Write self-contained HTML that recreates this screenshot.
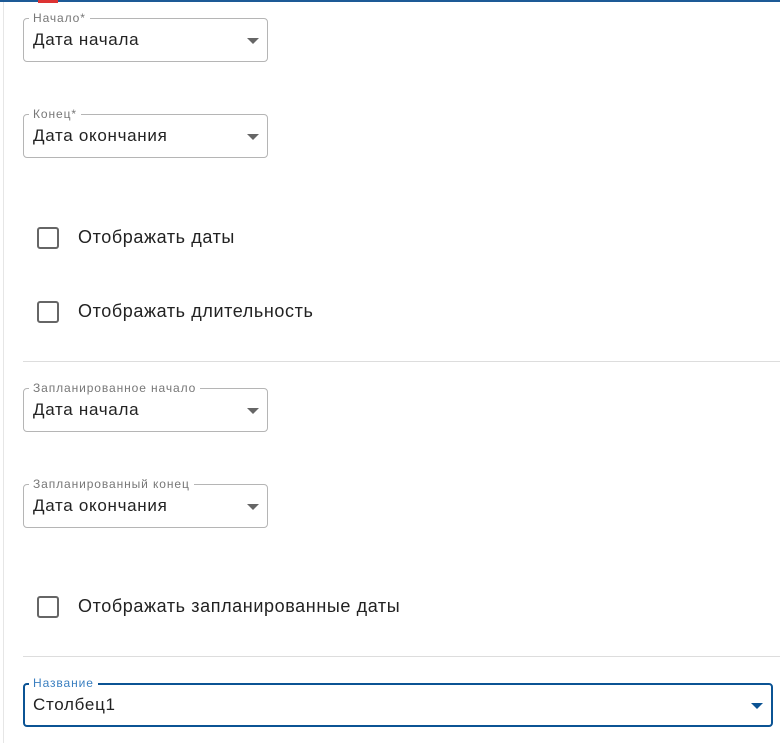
<!DOCTYPE html>
<html><head><meta charset="utf-8"><style>
body{margin:0;width:780px;height:743px;background:#fff;position:relative;overflow:hidden;font-family:"Liberation Sans",sans-serif;color:#222}
.top{position:absolute;left:0;top:0;width:780px;height:2px;background:#1d5a96}
.red{position:absolute;left:38px;top:0;width:20px;height:3px;background:#d33}
.vl{position:absolute;left:3px;top:2px;width:1px;height:741px;background:#e6e6e6}
.f{position:absolute;left:23px;width:243px;height:42px;border:1px solid #b5b5b5;border-radius:4px}
.f .l{position:absolute;left:5px;top:-8px;background:#fff;padding:0 4px;font-size:12px;color:#777;line-height:14px;letter-spacing:0.9px}
.f .v{position:absolute;left:9px;top:11px;font-size:17px;line-height:20px;color:#222;letter-spacing:0.7px}
.f .a{position:absolute;right:8px;top:19px;width:0;height:0;border-left:6px solid transparent;border-right:6px solid transparent;border-top:6px solid #666}
.cb{position:absolute;left:37px;width:18px;height:18px;border:2px solid #666;border-radius:3px}
.ct{position:absolute;left:78px;font-size:18px;line-height:20px;color:#222;letter-spacing:0.6px}
.hr{position:absolute;left:23px;right:0;height:1px;background:#ddd}
</style></head><body>
<div class="top"></div><div class="red"></div><div class="vl"></div>
<div class="f" style="top:18px"><span class="l">Начало*</span><span class="v">Дата начала</span><span class="a"></span></div>
<div class="f" style="top:114px"><span class="l">Конец*</span><span class="v">Дата окончания</span><span class="a"></span></div>
<div class="cb" style="top:227px"></div><div class="ct" style="top:227px">Отображать даты</div>
<div class="cb" style="top:301px"></div><div class="ct" style="top:301px">Отображать длительность</div>
<div class="hr" style="top:361px"></div>
<div class="f" style="top:388px"><span class="l">Запланированное начало</span><span class="v">Дата начала</span><span class="a"></span></div>
<div class="f" style="top:484px"><span class="l">Запланированный конец</span><span class="v">Дата окончания</span><span class="a"></span></div>
<div class="cb" style="top:596px"></div><div class="ct" style="top:596px">Отображать запланированные даты</div>
<div class="hr" style="top:656px"></div>
<div class="f" style="top:683px;width:746px;height:40px;border:2px solid #0b5394"><span class="l" style="color:#3a7fc0;top:-9px;left:4px">Название</span><span class="v" style="top:10px;left:8px">Столбец1</span><span class="a" style="border-top-color:#0b5394;top:18px"></span></div>
</body></html>
